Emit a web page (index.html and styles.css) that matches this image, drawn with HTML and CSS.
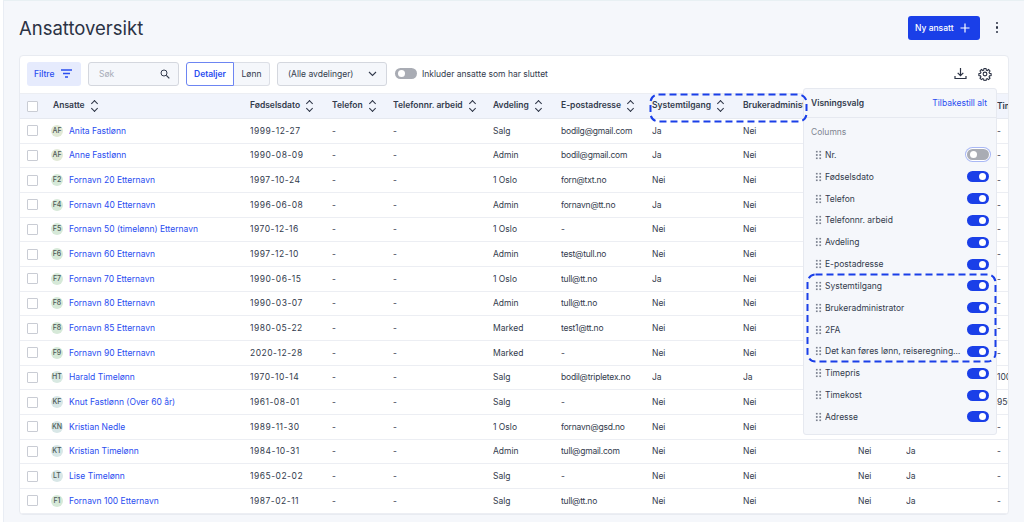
FILE: index.html
```html
<!DOCTYPE html>
<html lang="en">
<head>
    <meta charset="UTF-8">
    <title>Ansattoversikt</title>
    <link rel="stylesheet" href="styles.css">
</head>
<body>
<div class="page">
    <div class="top">
        <h1 class="title">Ansattoversikt</h1>
        <button class="new-btn">Ny ansatt
            <svg width="10" height="10" viewBox="0 0 10 10"><path d="M5 .5v9M.5 5h9" stroke="#fff" stroke-width="1.200" fill="none"/></svg>
        </button>
        <div class="kebab"><i></i><i></i><i></i></div>
    </div>
    <div class="card">
        <div class="toolbar">
            <button class="filter-btn">Filtre
                <svg width="13" height="9" viewBox="0 0 13 9"><path d="M1 1h11M3 4.500h7M5 8h3" stroke="#2a4df0" stroke-width="1.300" fill="none"/></svg>
            </button>
            <div class="search">Søk
                <svg width="10" height="10" viewBox="0 0 10 10"><circle cx="4" cy="4" r="3" stroke="#333b4d" fill="none"/><path d="M6.300 6.300l3 3" stroke="#333b4d" stroke-width="1.200"/></svg>
            </div>
            <div class="seg"><span class="seg-on">Detaljer</span><span class="seg-off">Lønn</span></div>
            <div class="select">(Alle avdelinger)
                <svg width="9" height="6" viewBox="0 0 9 6"><path d="M1 1l3.500 3.500L8 1" stroke="#333b4d" stroke-width="1.100" fill="none"/></svg>
            </div>
            <span class="toggle off"></span>
            <span class="inc-label">Inkluder ansatte som har sluttet</span>
            <div class="tools">
                <svg width="13" height="13" viewBox="0 0 13 13"><path d="M6.500 1v7.500M3.700 5.800l2.800 2.800 2.800-2.800M1 9v2.500h11V9" stroke="#2b3244" stroke-width="1.200" fill="none"/></svg>
                <svg width="14" height="14" viewBox="0 0 24 24" fill="none" stroke="#2b3244" stroke-width="1.900"><circle cx="12" cy="12" r="3.200"/><path d="M10.300 2.500h3.400l.5 2.800 1.700.7 2.300-1.600 2.400 2.400-1.600 2.300.7 1.700 2.800.5v3.400l-2.800.5-.7 1.700 1.600 2.300-2.400 2.400-2.300-1.600-1.700.7-.5 2.800h-3.400l-.5-2.800-1.700-.7-2.300 1.600-2.400-2.400 1.600-2.300-.7-1.700-2.800-.5v-3.400l2.800-.5.7-1.700-1.600-2.300 2.400-2.400 2.300 1.600 1.700-.7z"/></svg>
            </div>
        </div>
        <table class="grid">
            <colgroup>
                <col class="c-check"><col class="c-name"><col class="c-date"><col class="c-tel"><col class="c-telw"><col class="c-dep"><col class="c-mail"><col class="c-sys"><col class="c-adm"><col class="c-2fa"><col class="c-det"><col class="c-rate">
            </colgroup>
            <thead>
                <tr>
                    <th><span class="box"></span></th>
                    <th class="th-name">Ansatte<span class="sort"></span></th>
                    <th>Fødselsdato<span class="sort"></span></th>
                    <th>Telefon<span class="sort"></span></th>
                    <th>Telefonnr. arbeid<span class="sort"></span></th>
                    <th>Avdeling<span class="sort"></span></th>
                    <th>E-postadresse<span class="sort"></span></th>
                    <th>Systemtilgang<span class="sort"></span></th>
                    <th>Brukeradministrator<span class="sort"></span></th>
                    <th>2FA</th>
                    <th>Det kan føres</th>
                    <th>Timepris</th>
                </tr>
            </thead>
            <tbody>
                <tr><td><span class="box"></span></td><td><span class="av a-o">AF</span><a>Anita Fastlønn</a></td><td>1999-12-27</td><td>-</td><td>-</td><td>Salg</td><td>bodilg@gmail.com</td><td>Ja</td><td>Nei</td><td>Nei</td><td>Ja</td><td>-</td></tr>
                <tr><td><span class="box"></span></td><td><span class="av a-o">AF</span><a>Anne Fastlønn</a></td><td>1990-08-09</td><td>-</td><td>-</td><td>Admin</td><td>bodil@gmail.com</td><td>Ja</td><td>Nei</td><td>Nei</td><td>Ja</td><td>-</td></tr>
                <tr><td><span class="box"></span></td><td><span class="av a-g">F2</span><a>Fornavn 20 Etternavn</a></td><td>1997-10-24</td><td>-</td><td>-</td><td>1 Oslo</td><td>forn@txt.no</td><td>Nei</td><td>Nei</td><td>Nei</td><td>Ja</td><td>-</td></tr>
                <tr><td><span class="box"></span></td><td><span class="av a-g">F4</span><a>Fornavn 40 Etternavn</a></td><td>1996-06-08</td><td>-</td><td>-</td><td>Admin</td><td>fornavn@tt.no</td><td>Ja</td><td>Nei</td><td>Nei</td><td>Ja</td><td>-</td></tr>
                <tr><td><span class="box"></span></td><td><span class="av a-g">F5</span><a>Fornavn 50 (timelønn) Etternavn</a></td><td>1970-12-16</td><td>-</td><td>-</td><td>1 Oslo</td><td>-</td><td>Nei</td><td>Nei</td><td>Nei</td><td>Ja</td><td>-</td></tr>
                <tr><td><span class="box"></span></td><td><span class="av a-g">F6</span><a>Fornavn 60 Etternavn</a></td><td>1997-12-10</td><td>-</td><td>-</td><td>Admin</td><td>test@tull.no</td><td>Nei</td><td>Nei</td><td>Nei</td><td>Ja</td><td>-</td></tr>
                <tr><td><span class="box"></span></td><td><span class="av a-g">F7</span><a>Fornavn 70 Etternavn</a></td><td>1990-06-15</td><td>-</td><td>-</td><td>1 Oslo</td><td>tull@tt.no</td><td>Ja</td><td>Nei</td><td>Nei</td><td>Ja</td><td>-</td></tr>
                <tr><td><span class="box"></span></td><td><span class="av a-g">F8</span><a>Fornavn 80 Etternavn</a></td><td>1990-03-07</td><td>-</td><td>-</td><td>Admin</td><td>tull@tt.no</td><td>Nei</td><td>Nei</td><td>Nei</td><td>Ja</td><td>-</td></tr>
                <tr><td><span class="box"></span></td><td><span class="av a-g">F8</span><a>Fornavn 85 Etternavn</a></td><td>1980-05-22</td><td>-</td><td>-</td><td>Marked</td><td>test1@tt.no</td><td>Nei</td><td>Nei</td><td>Nei</td><td>Ja</td><td>-</td></tr>
                <tr><td><span class="box"></span></td><td><span class="av a-g">F9</span><a>Fornavn 90 Etternavn</a></td><td>2020-12-28</td><td>-</td><td>-</td><td>Marked</td><td>-</td><td>Nei</td><td>Nei</td><td>Nei</td><td>Ja</td><td>-</td></tr>
                <tr><td><span class="box"></span></td><td><span class="av a-t">HT</span><a>Harald Timelønn</a></td><td>1970-10-14</td><td>-</td><td>-</td><td>Salg</td><td>bodil@tripletex.no</td><td>Ja</td><td>Ja</td><td>Nei</td><td>Ja</td><td>1000</td></tr>
                <tr><td><span class="box"></span></td><td><span class="av a-b">KF</span><a>Knut Fastlønn (Over 60 år)</a></td><td>1961-08-01</td><td>-</td><td>-</td><td>Salg</td><td>-</td><td>Nei</td><td>Nei</td><td>Nei</td><td>Ja</td><td>950</td></tr>
                <tr><td><span class="box"></span></td><td><span class="av a-b">KN</span><a>Kristian Nedle</a></td><td>1989-11-30</td><td>-</td><td>-</td><td>1 Oslo</td><td>fornavn@gsd.no</td><td>Nei</td><td>Nei</td><td>Nei</td><td>Ja</td><td>-</td></tr>
                <tr><td><span class="box"></span></td><td><span class="av a-b">KT</span><a>Kristian Timelønn</a></td><td>1984-10-31</td><td>-</td><td>-</td><td>Admin</td><td>tull@gmail.com</td><td>Nei</td><td>Nei</td><td>Nei</td><td>Ja</td><td>-</td></tr>
                <tr><td><span class="box"></span></td><td><span class="av a-b">LT</span><a>Lise Timelønn</a></td><td>1965-02-02</td><td>-</td><td>-</td><td>Salg</td><td>-</td><td>Nei</td><td>Nei</td><td>Nei</td><td>Ja</td><td>-</td></tr>
                <tr><td><span class="box"></span></td><td><span class="av a-g">F1</span><a>Fornavn 100 Etternavn</a></td><td>1987-02-11</td><td>-</td><td>-</td><td>Salg</td><td>tull@tt.no</td><td>Nei</td><td>Nei</td><td>Nei</td><td>Ja</td><td>-</td></tr>
            </tbody>
        </table>
    </div>

    <!-- popup lies over the table -->
    <div class="panel">
        <div class="panel-head"><b>Visningsvalg</b><a>Tilbakestill alt</a></div>
        <div class="panel-sub">Columns</div>
        <div class="opt"><span class="grip"></span><span class="opt-label">Nr.</span><span class="toggle off ring"></span></div>
        <div class="opt"><span class="grip"></span><span class="opt-label">Fødselsdato</span><span class="toggle"></span></div>
        <div class="opt"><span class="grip"></span><span class="opt-label">Telefon</span><span class="toggle"></span></div>
        <div class="opt"><span class="grip"></span><span class="opt-label">Telefonnr. arbeid</span><span class="toggle"></span></div>
        <div class="opt"><span class="grip"></span><span class="opt-label">Avdeling</span><span class="toggle"></span></div>
        <div class="opt"><span class="grip"></span><span class="opt-label">E-postadresse</span><span class="toggle"></span></div>
        <div class="opt"><span class="grip"></span><span class="opt-label">Systemtilgang</span><span class="toggle"></span></div>
        <div class="opt"><span class="grip"></span><span class="opt-label">Brukeradministrator</span><span class="toggle"></span></div>
        <div class="opt"><span class="grip"></span><span class="opt-label">2FA</span><span class="toggle"></span></div>
        <div class="opt"><span class="grip"></span><span class="opt-label">Det kan føres lønn, reiseregninger og utlegg</span><span class="toggle"></span></div>
        <div class="opt"><span class="grip"></span><span class="opt-label">Timepris</span><span class="toggle"></span></div>
        <div class="opt"><span class="grip"></span><span class="opt-label">Timekost</span><span class="toggle"></span></div>
        <div class="opt"><span class="grip"></span><span class="opt-label">Adresse</span><span class="toggle"></span></div>
    </div>

    <!-- dashed highlights drawn on top of the screenshot -->
    <svg class="mark mark-head" width="160" height="30" viewBox="0 0 160 30"><rect x="1.500" y="1.500" width="156" height="27" rx="8" fill="none" stroke="#1a3fe8" stroke-width="2" stroke-dasharray="7 4"/></svg>
    <svg class="mark mark-opts" width="192" height="90" viewBox="0 0 192 90"><rect x="1.500" y="1.500" width="188" height="87" rx="8" fill="none" stroke="#1a3fe8" stroke-width="2" stroke-dasharray="7 4"/></svg>
</div>
</body>
</html>
```

FILE: styles.css
```css
* {
    box-sizing: border-box;
}
body {
    margin: 0;
    height: 522px;
    overflow: hidden;
    background-color: #fff;
    font-family: Inter, "Liberation Sans", sans-serif;
    font-size: 8.500px;
    color: #333b4d;
}
.page {
    position: relative;
    height: 522px;
    margin-left: 3px;
    padding: 0 15px;
    background-color: #f5f7fb;
    border-top: 1px solid #e8f0f3;
    border-left: 1px solid #e9edf4;
}
.top {
    display: flex;
    align-items: center;
    height: 54px;
    padding-bottom: 1px;
}
.title {
    margin: 0;
    flex: 1;
    font-size: 18.500px;
    font-weight: 400;
    color: #2b3244;
}
.new-btn {
    display: flex;
    align-items: center;
    justify-content: space-between;
    width: 72px;
    height: 24px;
    margin-right: 14.500px;
    padding: 0 10px 0 7px;
    border: 0;
    border-radius: 3px;
    background-color: #1a3fe8;
    color: #fff;
    font: 500 8.500px Inter, sans-serif;
}
.kebab {
    display: flex;
    flex-direction: column;
    align-items: center;
    gap: 2px;
    width: 5px;
    margin-right: 9.500px;
}
.kebab i {
    width: 2.500px;
    height: 2.500px;
    border-radius: 50%;
    background-color: #2b3244;
}
.card {
    height: 460px;
    overflow: hidden;
    background-color: #fff;
    border: 1px solid #e8ebf1;
    border-radius: 4px;
}
.toolbar {
    display: flex;
    align-items: center;
    height: 38px;
    padding: 0 0 2px 7px;
    border-bottom: 1px solid #eceef3;
}
.filter-btn {
    display: flex;
    align-items: center;
    justify-content: space-between;
    width: 54px;
    height: 24px;
    padding: 0 8px 0 7px;
    border: 0;
    border-radius: 3px;
    background-color: #e6ebfd;
    color: #2a4df0;
    font: 500 8.500px Inter, sans-serif;
}
.search {
    display: flex;
    align-items: center;
    justify-content: space-between;
    width: 91px;
    height: 24px;
    margin-left: 7px;
    padding: 0 8px 0 10px;
    border: 1px solid #d4d7de;
    border-radius: 3px;
    background-color: #f5f7fb;
    color: #a8adb9;
}
.seg {
    display: flex;
    height: 24px;
    margin-left: 7px;
    border-radius: 3px;
}
.seg span {
    display: flex;
    align-items: center;
    justify-content: center;
}
.seg-on {
    width: 48px;
    border: 1px solid #6d85f2;
    border-radius: 3px 0 0 3px;
    background-color: #fff;
    color: #2a4df0;
    font-weight: 600;
}
.seg-off {
    width: 36px;
    border: 1px solid #dcdfe6;
    border-left: 0;
    border-radius: 0 3px 3px 0;
    background-color: #f5f7fb;
}
.select {
    display: flex;
    align-items: center;
    justify-content: space-between;
    width: 110px;
    height: 24px;
    margin-left: 7px;
    padding: 0 9px 0 10px;
    border: 1px solid #d4d7de;
    border-radius: 3px;
    background-color: #f5f7fb;
}
.toggle {
    position: relative;
    flex: none;
    width: 22px;
    height: 11px;
    border-radius: 6px;
    background-color: #1a3fe8;
}
.toggle::after {
    content: "";
    position: absolute;
    top: 2px;
    right: 3px;
    width: 7px;
    height: 7px;
    border-radius: 50%;
    background-color: #fff;
}
.toggle.off {
    background-color: #a9acb4;
}
.toggle.off::after {
    right: auto;
    left: 3px;
}
.toggle.ring {
    box-shadow: 0 0 0 1px #fff, 0 0 0 2px #a9b8f5;
}
.toolbar .toggle {
    margin-left: 8px;
}
.inc-label {
    margin-left: 5px;
}
.tools {
    display: flex;
    align-items: center;
    gap: 11px;
    margin-left: auto;
    padding-right: 16px;
}
.grid {
    width: 1031px;
    table-layout: fixed;
    border-collapse: separate;
    border-spacing: 0;
}
.c-check { width: 31px; }
.c-name { width: 199px; }
.c-date { width: 82px; }
.c-tel { width: 61px; }
.c-telw { width: 100px; }
.c-dep { width: 68px; }
.c-mail { width: 91px; }
.c-sys { width: 91px; }
.c-adm { width: 115px; }
.c-2fa { width: 48px; }
.c-det { width: 91px; }
.c-rate { width: 54px; }
.grid th {
    height: 25px;
    padding: 0;
    background-color: #f1f4fc;
    border-bottom: 1px solid #e6e9f0;
    font-weight: 600;
    text-align: left;
    white-space: nowrap;
    overflow: hidden;
}
.grid th:first-child,
.grid td:first-child {
    padding-left: 7px;
}
.th-name {
    padding-left: 2px !important;
}
.grid td {
    height: 24.670px;
    padding: 0;
    border-bottom: 1px solid #eceef3;
    white-space: nowrap;
    overflow: hidden;
}
/* dates run wider and mail addresses tighter than plain Inter */
.grid td:nth-child(3) {
    letter-spacing: .5px;
}
.grid td:nth-child(7) {
    letter-spacing: -.2px;
}
.box {
    display: block;
    width: 11px;
    height: 11px;
    border: 1px solid #c9ccd4;
    border-radius: 1px;
    background-color: #fff;
}
.sort {
    display: inline-block;
    position: relative;
    width: 7px;
    height: 12px;
    margin-left: 6px;
    vertical-align: middle;
}
.sort::before,
.sort::after {
    content: "";
    position: absolute;
    left: 1px;
    width: 4px;
    height: 4px;
    border-left: 1px solid #2b3244;
    border-top: 1px solid #2b3244;
}
.sort::before {
    top: 1px;
    transform: rotate(45deg);
}
.sort::after {
    bottom: 1px;
    transform: rotate(225deg);
}
.av {
    display: inline-block;
    width: 12px;
    height: 12px;
    margin-right: 6px;
    border-radius: 50%;
    font-size: 7px;
    font-weight: 500;
    line-height: 12px;
    text-align: center;
    vertical-align: middle;
    color: #4d5a58;
}
.a-o { background-color: #e1e9d6; }
.a-g { background-color: #d6e9d8; }
.a-t { background-color: #d8e9e2; }
.a-b { background-color: #d8e7e7; }
.grid a {
    color: #2a4df0;
    vertical-align: middle;
}
.panel {
    position: absolute;
    top: 87px;
    left: 799px;
    width: 194px;
    height: 347px;
    background-color: #f5f7fb;
    border: 1px solid #e6e9f0;
    border-radius: 3px;
}
.panel-head {
    display: flex;
    align-items: center;
    justify-content: space-between;
    height: 29px;
    padding: 0 9px 0 7px;
    border-bottom: 1px solid #e6e9f0;
}
.panel-head b {
    font-weight: 600;
}
.panel-head a {
    color: #2a4df0;
}
.panel-sub {
    padding: 9px 7px 0;
    height: 26px;
    color: #7f8592;
}
.opt {
    display: flex;
    align-items: center;
    height: 21.830px;
    padding: 0 7px 0 11px;
}
.grip {
    flex: none;
    width: 7px;
    height: 10px;
    margin-right: 3px;
    background-image: radial-gradient(circle, #7c8290 1.100px, transparent 1.300px);
    background-size: 3.500px 3.330px;
}
.opt-label {
    flex: 1;
    min-width: 0;
    padding-right: 2px;
    white-space: nowrap;
    overflow: hidden;
    text-overflow: ellipsis;
}
.mark {
    position: absolute;
}
.mark-head {
    top: 92px;
    left: 645px;
}
.mark-opts {
    top: 272px;
    left: 802px;
}
```
